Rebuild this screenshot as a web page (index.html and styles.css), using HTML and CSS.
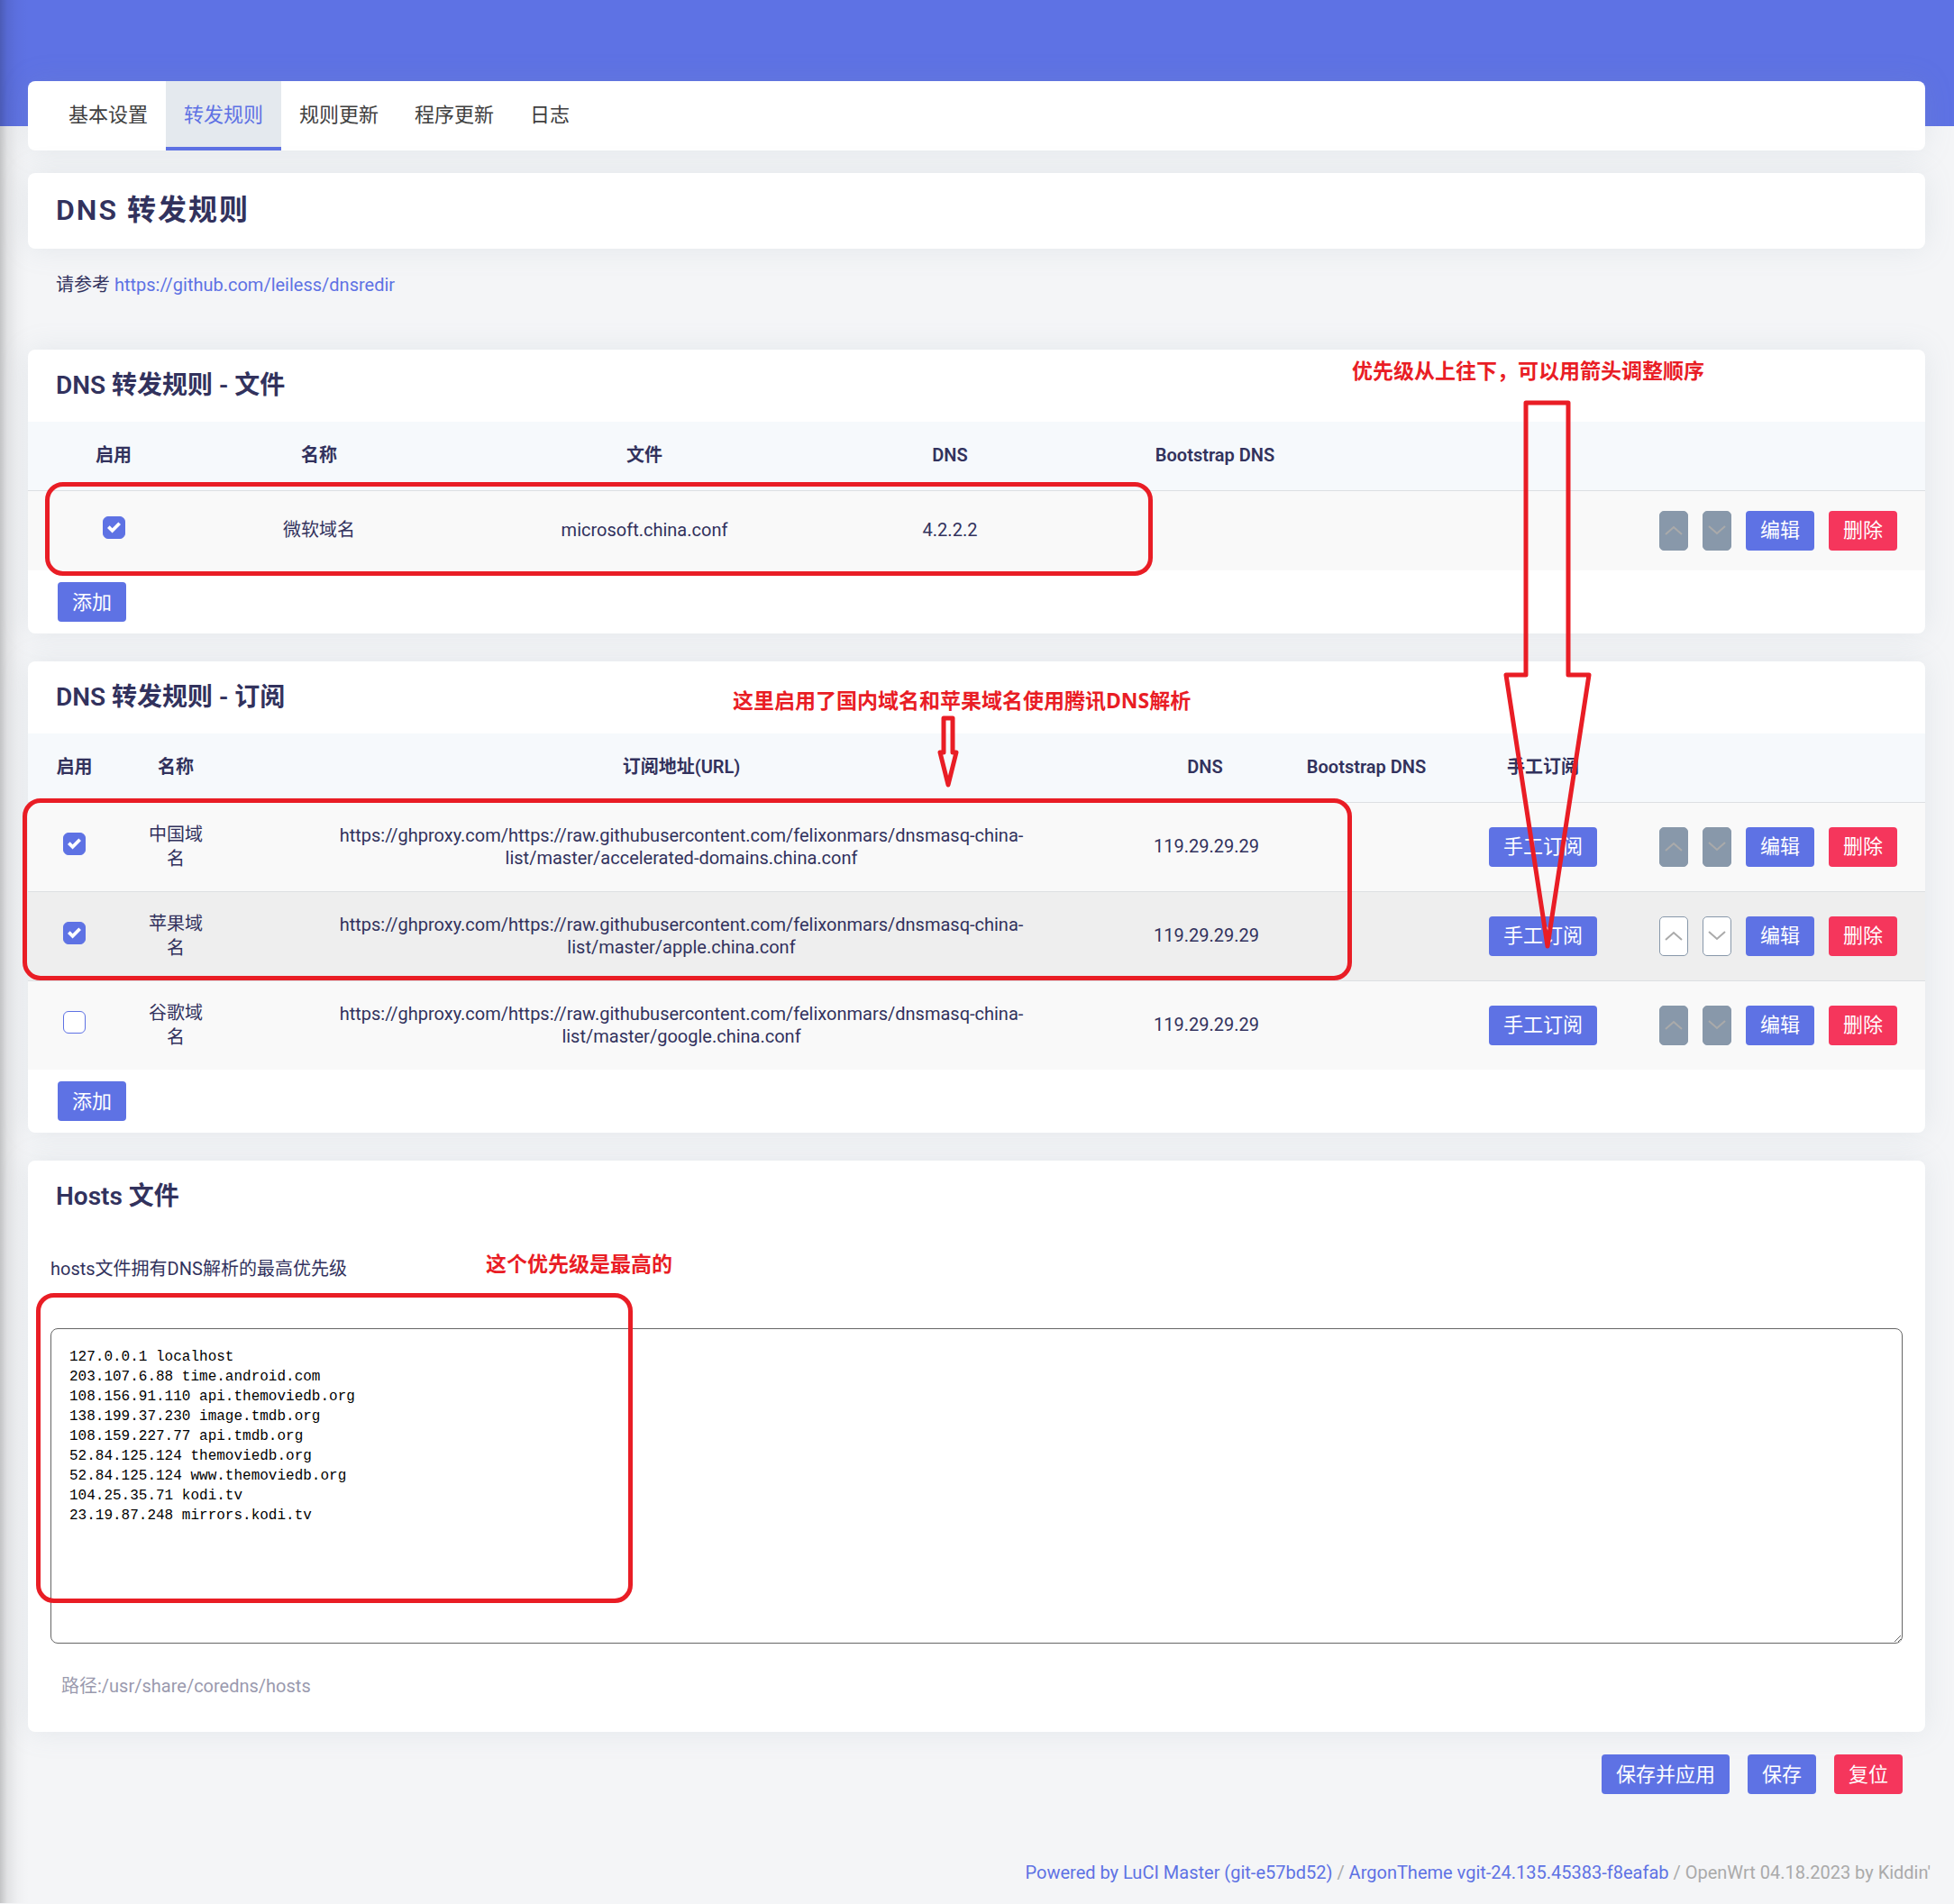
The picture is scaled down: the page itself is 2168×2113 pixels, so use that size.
FILE: index.html
```html
<!DOCTYPE html>
<html lang="zh-CN">
<head>
<meta charset="utf-8">
<meta name="viewport" content="width=device-width, initial-scale=1">
<title>DNS 转发规则</title>
<link rel="stylesheet" href="styles.css">
</head>
<body>
<svg class="symbols" aria-hidden="true">
  <symbol id="chevron-up" viewBox="0 0 20 12"><path d="M1 10 10 2l9 8"/></symbol>
  <symbol id="chevron-down" viewBox="0 0 20 12"><path d="M1 1l9 8 9-8"/></symbol>
</svg>
<div class="edge edge-top"></div>
<div class="edge edge-bottom"></div>
<header class="banner"></header>
<main class="main">
  <nav class="card tabs">
    <a class="tab" href="#basic">基本设置</a>
    <a class="tab tab-active" href="#rules" aria-current="page">转发规则</a>
    <a class="tab" href="#rule-update">规则更新</a>
    <a class="tab" href="#app-update">程序更新</a>
    <a class="tab" href="#log">日志</a>
  </nav>
  <div class="card title-card"><h1 class="page-title">DNS 转发规则</h1></div>
  <p class="intro">请参考 <a class="link" href="https://github.com/leiless/dnsredir">https://github.com/leiless/dnsredir</a></p>

  <section class="card">
    <h2 class="card-title">DNS 转发规则 - 文件</h2>
    <table class="rules rules-file">
      <colgroup><col class="f-enable"><col class="f-name"><col class="f-file"><col class="f-dns"><col class="f-boot"><col></colgroup>
      <thead><tr><th>启用</th><th>名称</th><th>文件</th><th>DNS</th><th>Bootstrap DNS</th><th></th></tr></thead>
      <tbody>
        <tr>
          <td class="check-cell"><input class="check" type="checkbox" aria-label="启用 微软域名" checked></td>
          <td>微软域名</td><td>microsoft.china.conf</td><td>4.2.2.2</td><td></td>
          <td class="actions-cell"><div class="actions">
            <button class="move" type="button" aria-label="上移" disabled><svg><use href="#chevron-up"/></svg></button>
            <button class="move" type="button" aria-label="下移" disabled><svg><use href="#chevron-down"/></svg></button>
            <button class="btn" type="button">编辑</button>
            <button class="btn btn-danger" type="button">删除</button>
          </div></td>
        </tr>
      </tbody>
    </table>
    <div class="card-foot"><button class="btn" type="button">添加</button></div>
    <div class="frame frame-file"></div>
    <p class="note note-order">优先级从上往下，可以用箭头调整顺序</p>
    <svg class="arrow arrow-order" viewBox="0 0 98 612" aria-hidden="true"><path d="M25 3H72V305H95L49 606 3 305H25Z"/></svg>
  </section>

  <section class="card">
    <h2 class="card-title">DNS 转发规则 - 订阅</h2>
    <table class="rules rules-sub">
      <colgroup><col class="s-enable"><col class="s-name"><col class="s-url"><col class="s-dns"><col class="s-boot"><col class="s-manual"><col></colgroup>
      <thead><tr><th>启用</th><th>名称</th><th>订阅地址(URL)</th><th>DNS</th><th>Bootstrap DNS</th><th>手工订阅</th><th></th></tr></thead>
      <tbody>
        <tr>
          <td class="check-cell"><input class="check" type="checkbox" aria-label="启用 中国域名" checked></td>
          <td class="name-cell">中国域名</td><td>https://ghproxy.com/https://raw.githubusercontent.com/felixonmars/dnsmasq-china-list/master/accelerated-domains.china.conf</td><td>119.29.29.29</td><td></td>
          <td><button class="btn" type="button">手工订阅</button></td>
          <td class="actions-cell"><div class="actions">
            <button class="move" type="button" aria-label="上移" disabled><svg><use href="#chevron-up"/></svg></button>
            <button class="move" type="button" aria-label="下移" disabled><svg><use href="#chevron-down"/></svg></button>
            <button class="btn" type="button">编辑</button>
            <button class="btn btn-danger" type="button">删除</button>
          </div></td>
        </tr>
        <tr class="row-hover">
          <td class="check-cell"><input class="check" type="checkbox" aria-label="启用 苹果域名" checked></td>
          <td class="name-cell">苹果域名</td><td>https://ghproxy.com/https://raw.githubusercontent.com/felixonmars/dnsmasq-china-list/master/apple.china.conf</td><td>119.29.29.29</td><td></td>
          <td><button class="btn" type="button">手工订阅</button></td>
          <td class="actions-cell"><div class="actions">
            <button class="move" type="button" aria-label="上移"><svg><use href="#chevron-up"/></svg></button>
            <button class="move" type="button" aria-label="下移"><svg><use href="#chevron-down"/></svg></button>
            <button class="btn" type="button">编辑</button>
            <button class="btn btn-danger" type="button">删除</button>
          </div></td>
        </tr>
        <tr>
          <td class="check-cell"><input class="check" type="checkbox" aria-label="启用 谷歌域名"></td>
          <td class="name-cell">谷歌域名</td><td>https://ghproxy.com/https://raw.githubusercontent.com/felixonmars/dnsmasq-china-list/master/google.china.conf</td><td>119.29.29.29</td><td></td>
          <td><button class="btn" type="button">手工订阅</button></td>
          <td class="actions-cell"><div class="actions">
            <button class="move" type="button" aria-label="上移" disabled><svg><use href="#chevron-up"/></svg></button>
            <button class="move" type="button" aria-label="下移" disabled><svg><use href="#chevron-down"/></svg></button>
            <button class="btn" type="button">编辑</button>
            <button class="btn btn-danger" type="button">删除</button>
          </div></td>
        </tr>
      </tbody>
    </table>
    <div class="card-foot"><button class="btn" type="button">添加</button></div>
    <div class="frame frame-sub"></div>
    <p class="note note-dns">这里启用了国内域名和苹果域名使用腾讯DNS解析</p>
    <svg class="arrow arrow-dns" viewBox="0 0 24 82" aria-hidden="true"><path d="M7 3H17V41H21L12 77 3 41H7Z"/></svg>
  </section>

  <section class="card">
    <h2 class="card-title">Hosts 文件</h2>
    <div class="hosts">
      <label class="hosts-label" for="hosts">hosts文件拥有DNS解析的最高优先级</label>
      <textarea class="hosts-input" id="hosts" spellcheck="false">127.0.0.1 localhost
203.107.6.88 time.android.com
108.156.91.110 api.themoviedb.org
138.199.37.230 image.tmdb.org
108.159.227.77 api.tmdb.org
52.84.125.124 themoviedb.org
52.84.125.124 www.themoviedb.org
104.25.35.71 kodi.tv
23.19.87.248 mirrors.kodi.tv</textarea>
      <p class="hosts-path">路径:/usr/share/coredns/hosts</p>
    </div>
    <div class="frame frame-hosts"></div>
    <p class="note note-hosts">这个优先级是最高的</p>
  </section>

  <div class="page-actions">
    <button class="btn" type="button">保存并应用</button>
    <button class="btn" type="button">保存</button>
    <button class="btn btn-danger" type="button">复位</button>
  </div>
</main>
<footer class="footer"><a class="link" href="https://github.com/openwrt/luci">Powered by LuCI Master (git-e57bd52)</a> / <a class="link" href="https://github.com/jerrykuku/luci-theme-argon">ArgonTheme vgit-24.135.45383-f8eafab</a> / OpenWrt 04.18.2023 by Kiddin'</footer>
</body>
</html>
```
FILE: styles.css
```css
:root {
  --primary: #5e72e4;
  --danger: #f5365c;
  --ink: #32325d;
  --mark: #e91d25;
}

* { box-sizing: border-box; }

body {
  position: relative;
  margin: 0;
  background: #f4f5f7;
  color: var(--ink);
  font: 20px/25px Roboto, "Noto Sans CJK SC", sans-serif;
}

h1, h2, p { margin: 0; }

.symbols { position: absolute; width: 0; height: 0; }

/* Shadow cast by the off-canvas sidebar */
.edge {
  position: absolute;
  left: 0;
  width: 32px;
  background: linear-gradient(90deg, rgba(0, 0, 0, .2), rgba(0, 0, 0, .08) 8px, rgba(0, 0, 0, .02) 20px, transparent);
  pointer-events: none;
}
.edge-top { top: 0; height: 862px; }
.edge-bottom { top: 862px; bottom: 0; }

.banner { height: 140px; background: var(--primary); }

.main { margin-top: -50px; padding: 0 32px 0 31px; }

.card {
  position: relative;
  margin-bottom: 31px;
  border-radius: 8px;
  background: #fff;
  box-shadow: 0 0 32px rgba(136, 152, 170, .15);
}

.tabs { display: flex; margin-bottom: 25px; padding-left: 25px; }
.tab {
  padding: 21px 20px 19px;
  border-bottom: 4px solid transparent;
  color: #404040;
  font-size: 22px;
  line-height: 33px;
  text-decoration: none;
}
.tab-active { border-color: var(--primary); background: #e4e9ee; color: var(--primary); }

.title-card { margin-bottom: 28px; padding: 21px 31px 23px; }
.page-title { font-size: 32px; line-height: 40px; font-weight: 600; letter-spacing: 2px; }

.intro { margin-bottom: 59px; padding: 0 31px; }
.link { color: var(--primary); text-decoration: none; }

.card-title { padding: 20px 31px; font-size: 28px; line-height: 40px; font-weight: 600; }

.rules { width: 100%; border-collapse: collapse; table-layout: fixed; text-align: center; }
.rules th { height: 76px; padding: 0 24px; background: #f6f9fc; font-weight: 600; }
.rules td { height: 99px; padding: 0 24px; border-top: 1px solid #dddfe2; background: #f9f9f9; }
.rules-file td { height: 89px; }
.rules .row-hover td { background: #eee; }
.rules .name-cell { line-height: 27px; }
.rules .check-cell { padding-bottom: 6px; }
.rules .actions-cell { padding-right: 31px; }

.f-enable { width: 190px; }
.f-name { width: 266px; }
.f-file { width: 456px; }
.f-dns { width: 222px; }
.f-boot { width: 366px; }
.s-enable { width: 103px; }
.s-name { width: 122px; }
.s-dns { width: 162px; }
.s-boot, .s-manual { width: 196px; }
.rules-sub col:last-child { width: 326px; }

.check {
  display: block;
  appearance: none;
  width: 25px;
  height: 25px;
  margin: 0 auto;
  border: 1px solid var(--primary);
  border-radius: 6px;
  background: #fff;
}
.check:checked {
  background: var(--primary) url("data:image/svg+xml,%3Csvg xmlns='http://www.w3.org/2000/svg' viewBox='0 0 8 8'%3E%3Cpath fill='%23fff' d='M6.564.75l-3.59 3.612-1.538-1.55L0 4.26 2.974 7.25 8 2.193z'/%3E%3C/svg%3E") center / 15px no-repeat;
}

.actions { display: flex; justify-content: flex-end; gap: 16px; }

.btn {
  height: 44px;
  padding: 0 16px;
  border: 0;
  border-radius: 4px;
  background: var(--primary);
  color: #fff;
  font: inherit;
  font-size: 22px;
}
.btn-danger { background: var(--danger); }

.move {
  display: grid;
  place-items: center;
  width: 32px;
  height: 44px;
  padding: 0;
  border: 1px solid #8898aa;
  border-radius: 5px;
  background: #fff;
}
.move:disabled { background: #8898aa; }
.move svg { width: 20px; height: 12px; fill: none; stroke: #aaa; stroke-width: 2; }

.card-foot { padding: 13px 33px; }

.hosts { display: grid; padding: 28px 25px 38px; }
.hosts-label { margin-bottom: 53px; }
.hosts-input {
  display: block;
  width: 100%;
  height: 350px;
  padding: 20px;
  border: 1px solid #666;
  border-radius: 8px;
  color: #000;
  font: 16px/22px "Liberation Mono", monospace;
  resize: vertical;
}
.hosts-path { margin-top: 35px; padding: 0 12px; color: #9a9aae; }

.page-actions { display: flex; justify-content: flex-end; gap: 20px; margin-top: -6px; padding-right: 25px; }

.footer { margin-top: 75px; padding: 0 26px 21px; color: #aaa; text-align: right; }

/* Hand-drawn annotations laid over the cards */
.frame { position: absolute; z-index: 1; border: 5px solid var(--mark); border-radius: 20px; pointer-events: none; }
.frame-file { left: 19px; top: 147px; width: 1229px; height: 104px; }
.frame-sub { left: -6px; top: 152px; width: 1475px; height: 202px; }
.frame-hosts { left: 9px; top: 147px; width: 662px; height: 344px; }
.note {
  position: absolute;
  z-index: 1;
  color: var(--mark);
  font-family: "Noto Sans", "Noto Sans CJK SC", sans-serif;
  font-size: 23px;
  font-weight: 700;
  white-space: nowrap;
}
.note-order { left: 1469px; top: 11px; }
.note-dns { left: 782px; top: 31px; }
.note-hosts { left: 508px; top: 102px; }
.arrow { position: absolute; z-index: 1; fill: none; stroke: var(--mark); stroke-width: 5; stroke-linejoin: round; pointer-events: none; }
.arrow-order { left: 1637px; top: 56px; width: 98px; height: 612px; }
.arrow-dns { left: 1009px; top: 60px; width: 24px; height: 82px; }
```
